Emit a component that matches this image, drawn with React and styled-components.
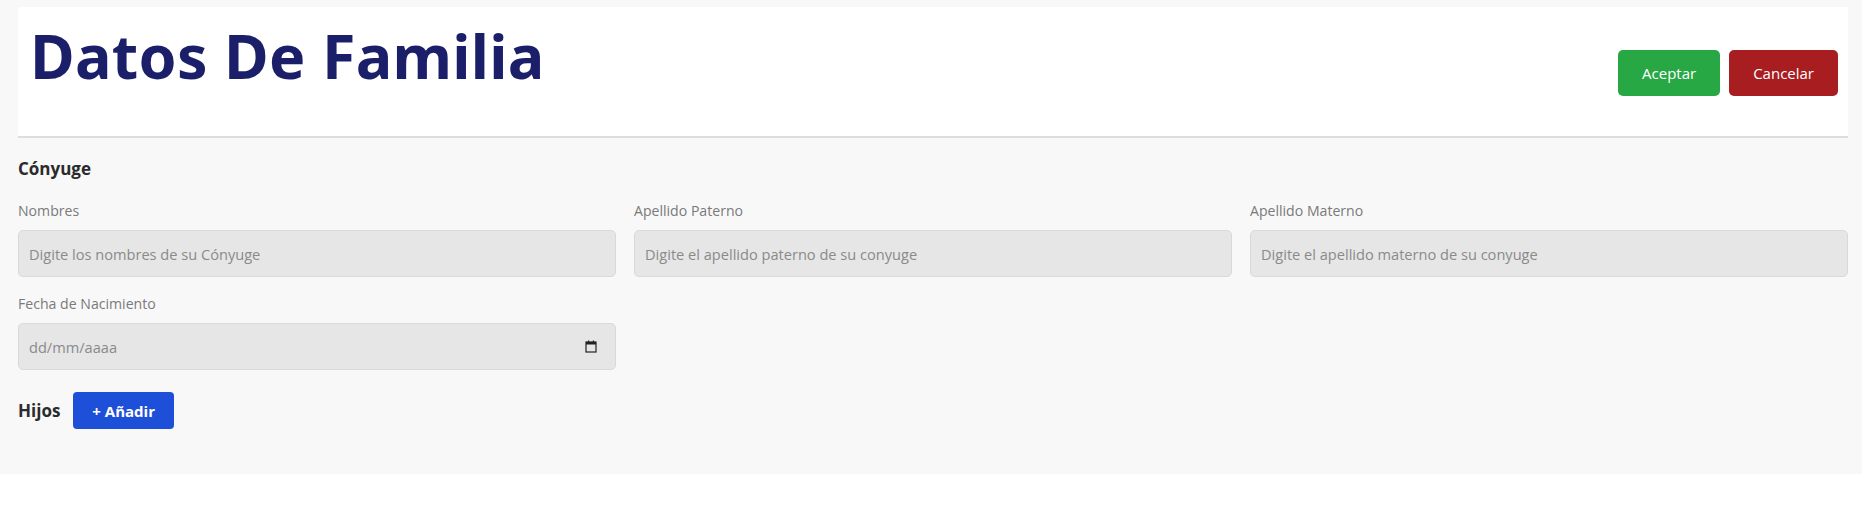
import React from 'react'
import styled, { createGlobalStyle } from 'styled-components'

const GlobalStyle = createGlobalStyle`
  body {
    margin: 0;
    background: #ffffff;
    font-family: 'Open Sans', 'Noto Sans', sans-serif;
  }
`

const Page = styled.div`
  background: #f8f8f8;
  padding: 7px 14px 45px 18px;
`

const HeaderCard = styled.header`
  background: #ffffff;
  border-bottom: 2px solid #dddddd;
  height: 129px;
  display: flex;
  justify-content: space-between;
  align-items: center;
  padding: 0 10px 0 12px;
`

const Title = styled.h1`
  align-self: flex-start;
  margin: 0;
  padding-top: 11px;
  font-family: 'Noto Sans', sans-serif;
  font-weight: 700;
  font-size: 61px;
  line-height: 76px;
  color: #1b1f6a;
  letter-spacing: 0.3px;
`

const Actions = styled.div`
  display: flex;
  gap: 9px;
  margin-top: 2px;
`

const ActionButton = styled.button`
  height: 46px;
  padding: 0 ${({ pad }) => pad}px;
  border: none;
  border-radius: 5px;
  background: ${({ bg }) => bg};
  color: #ffffff;
  font-family: 'Open Sans', sans-serif;
  font-size: 15px;
`

const SectionTitle = styled.h2`
  margin: 0;
  padding-top: 20px;
  font-size: 17px;
  line-height: 22px;
  font-weight: 700;
  color: #2b2b2b;
`

const Grid = styled.div`
  display: grid;
  grid-template-columns: repeat(3, 1fr);
  column-gap: 18px;
  row-gap: 17px;
  margin-top: 21px;
`

const Field = styled.label`
  display: flex;
  flex-direction: column;
  gap: 9px;
`

const Label = styled.span`
  font-size: 14.1px;
  line-height: 20px;
  color: #7a7a7a;
`

const InputBox = styled.div`
  height: 47px;
  box-sizing: border-box;
  background: #e6e6e6;
  border: 1px solid #d9d9d9;
  border-radius: 5px;
  display: flex;
  align-items: center;
  padding: 0 18px 0 10px;
`

const Input = styled.input`
  flex: 1;
  border: none;
  outline: none;
  background: transparent;
  font-family: 'Open Sans', sans-serif;
  font-size: 14.6px;
  color: #333;
  padding: 0;

  &::placeholder {
    color: #8a8a8a;
  }
`

const KidsRow = styled.div`
  display: flex;
  align-items: center;
  gap: 13px;
  margin-top: 22px;
`

const KidsTitle = styled.span`
  font-size: 17px;
  font-weight: 700;
  color: #2b2b2b;
`

const AddButton = styled.button`
  height: 37px;
  padding: 0 19px;
  border: none;
  border-radius: 4px;
  background: #1e4fd8;
  color: #ffffff;
  font-family: 'Open Sans', sans-serif;
  font-weight: 700;
  font-size: 15px;
`

const CalendarIcon = () => (
  <svg width='12' height='13' viewBox='0 0 12 13'>
    <rect x='1' y='2' width='10' height='10' fill='none' stroke='#222' strokeWidth='1.2' />
    <rect x='1' y='2' width='10' height='2.5' fill='#222' />
    <rect x='3' y='0.5' width='1.2' height='2' fill='#222' />
    <rect x='7.8' y='0.5' width='1.2' height='2' fill='#222' />
  </svg>
)

const fields = [
  { label: 'Nombres', placeholder: 'Digite los nombres de su Cónyuge' },
  { label: 'Apellido Paterno', placeholder: 'Digite el apellido paterno de su conyuge' },
  { label: 'Apellido Materno', placeholder: 'Digite el apellido materno de su conyuge' }
]

export default function App () {
  return (
    <>
      <GlobalStyle />
      <Page>
        <HeaderCard>
          <Title>Datos De Familia</Title>
          <Actions>
            <ActionButton bg='#28a745' pad={24}>Aceptar</ActionButton>
            <ActionButton bg='#a71d20' pad={24}>Cancelar</ActionButton>
          </Actions>
        </HeaderCard>
        <SectionTitle>Cónyuge</SectionTitle>
        <Grid>
          {fields.map((f) => (
            <Field key={f.label}>
              <Label>{f.label}</Label>
              <InputBox>
                <Input placeholder={f.placeholder} />
              </InputBox>
            </Field>
          ))}
          <Field>
            <Label>Fecha de Nacimiento</Label>
            <InputBox>
              <Input placeholder='dd/mm/aaaa' />
              <CalendarIcon />
            </InputBox>
          </Field>
        </Grid>
        <KidsRow>
          <KidsTitle>Hijos</KidsTitle>
          <AddButton>+ Añadir</AddButton>
        </KidsRow>
      </Page>
    </>
  )
}
